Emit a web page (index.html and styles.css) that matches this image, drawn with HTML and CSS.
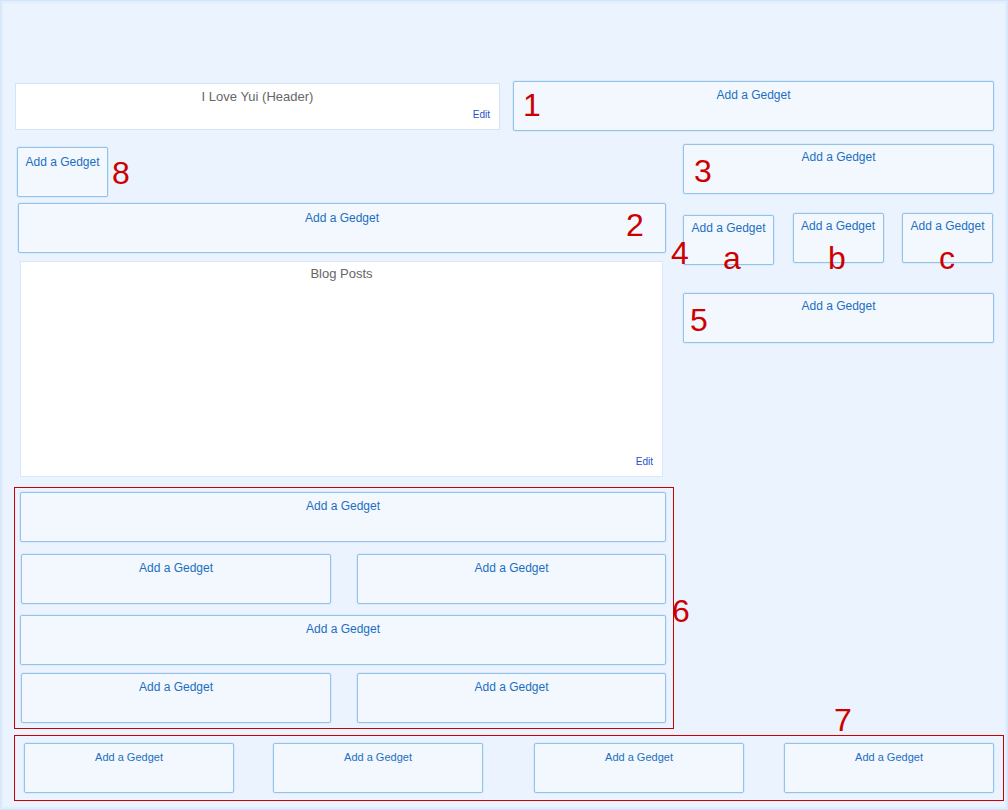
FILE: index.html
```html
<!DOCTYPE html>
<html>
<head>
<meta charset="utf-8">
<link rel="stylesheet" href="styles.css">
</head>
<body>
<div class="page">
  <div class="top-row">
    <div class="header-box">
      <div class="panel-title">I Love Yui (Header)</div>
      <a class="edit">Edit</a>
    </div>
    <div class="gadget box1">Add a Gedget</div>
  </div>

  <div class="middle">
    <div class="left-col">
      <div class="gadget box8">Add a Gedget</div>
      <div class="gadget box2">Add a Gedget</div>
      <div class="blog-box">
        <div class="panel-title">Blog Posts</div>
        <a class="edit">Edit</a>
      </div>
      <div class="red-frame frame6">
        <div class="gadget full">Add a Gedget</div>
        <div class="half-row r1">
          <div class="gadget half">Add a Gedget</div>
          <div class="gadget half">Add a Gedget</div>
        </div>
        <div class="gadget full f2">Add a Gedget</div>
        <div class="half-row r2">
          <div class="gadget half">Add a Gedget</div>
          <div class="gadget half">Add a Gedget</div>
        </div>
      </div>
    </div>
    <div class="right-col">
      <div class="gadget box3">Add a Gedget</div>
      <div class="abc-row">
        <div class="gadget small sa">Add a Gedget</div>
        <div class="gadget small">Add a Gedget</div>
        <div class="gadget small">Add a Gedget</div>
      </div>
      <div class="gadget box5">Add a Gedget</div>
    </div>
  </div>

  <div class="red-frame frame7">
    <div class="gadget foot">Add a Gedget</div>
    <div class="gadget foot">Add a Gedget</div>
    <div class="gadget foot">Add a Gedget</div>
    <div class="gadget foot">Add a Gedget</div>
  </div>

  <span class="num n1">1</span>
  <span class="num n8">8</span>
  <span class="num n3">3</span>
  <span class="num n2">2</span>
  <span class="num n4">4</span>
  <span class="num na">a</span>
  <span class="num nb">b</span>
  <span class="num nc">c</span>
  <span class="num n5">5</span>
  <span class="num n6">6</span>
  <span class="num n7">7</span>
</div>
</body>
</html>
```

FILE: styles.css
```css
* { box-sizing: border-box; }

html, body {
  margin: 0;
  padding: 0;
  background: #eaf2fd;
}

body {
  font-family: "Liberation Sans", Arial, sans-serif;
}

.page {
  position: relative;
  width: 1008px;
  height: 810px;
  padding-top: 81px;
  background: #ebf3fe;
  box-shadow: inset 0 0 0 1px #d3e5fb, inset 0 0 0 3px #e3eefd;
}

.gadget {
  background: #f3f8fe;
  border: 1px solid #93c3ea;
  border-radius: 2px;
  box-shadow: 0 0 0 1px #dcebfa;
  color: #1b6fc2;
  font-size: 12px;
  line-height: 14px;
  text-align: center;
  padding-top: 6px;
  height: 50px;
}

.top-row {
  display: flex;
  align-items: flex-start;
}

.header-box {
  position: relative;
  margin-left: 15px;
  margin-top: 2px;
  width: 485px;
  height: 47px;
  background: #ffffff;
  border: 1px solid #d2e5f8;
}

.panel-title {
  color: #666666;
  font-size: 13px;
  line-height: 16px;
  text-align: center;
  padding-top: 5px;
}

.edit {
  position: absolute;
  right: 9px;
  color: #1f4fc9;
  font-size: 10px;
  line-height: 12px;
}

.header-box .edit { top: 25px; }

.box1 {
  margin-left: 13px;
  width: 481px;
  padding-top: 6px;
}

.middle {
  display: flex;
  align-items: flex-start;
  margin-top: 13px;
}

.left-col {
  margin-left: 14px;
  width: 660px;
  padding-top: 3px;
}

.box8 {
  margin-left: 3px;
  width: 91px;
  padding-top: 7px;
}

.box2 {
  margin-left: 4px;
  margin-top: 6px;
  width: 648px;
  padding-top: 7px;
}

.blog-box {
  position: relative;
  margin-left: 6px;
  margin-top: 8px;
  width: 643px;
  height: 216px;
  background: #ffffff;
  border: 1px solid #d8e8f9;
}

.blog-box .panel-title { padding-top: 4px; }
.blog-box .edit { bottom: 8px; right: 9px; }

.red-frame {
  border: 1px solid #cc0000;
}

.frame6 {
  margin-top: 10px;
  width: 660px;
  height: 242px;
  padding: 4px 0 0 5px;
}

.full {
  width: 646px;
}

.half-row {
  display: flex;
  gap: 26px;
  padding-left: 1px;
  margin-top: 12px;
  width: 646px;
}

.half {
  width: 310px;
}

.half + .half { width: 309px; }

.f2 { margin-top: 11px; }
.r2 { margin-top: 8px; }

.right-col {
  margin-left: 9px;
  width: 311px;
}

.box3 {
  width: 311px;
  padding-top: 5px;
}

.abc-row {
  display: flex;
  justify-content: space-between;
  align-items: flex-start;
  margin-top: 19px;
  width: 310px;
}

.small {
  width: 91px;
  padding-top: 5px;
}

.sa { margin-top: 2px; }

.box5 {
  margin-top: 28px;
  width: 311px;
  padding-top: 5px;
}

.frame7 {
  margin-left: 14px;
  margin-top: 6px;
  width: 990px;
  height: 66px;
  display: flex;
  align-items: flex-start;
  padding: 7px 0 0 9px;
}

.foot {
  width: 210px;
  font-size: 11px;
  line-height: 13px;
  padding-top: 7px;
}

.foot:nth-child(2) { margin-left: 39px; }
.foot:nth-child(3) { margin-left: 51px; }
.foot:nth-child(4) { margin-left: 40px; }

.num {
  position: absolute;
  color: #cc0000;
  font-family: "Liberation Sans", Arial, sans-serif;
  font-size: 32px;
  line-height: 32px;
}

.n1 { left: 523px; top: 89px; }
.n8 { left: 112px; top: 157px; }
.n3 { left: 694px; top: 155px; }
.n2 { left: 626px; top: 209px; }
.n4 { left: 671px; top: 237px; }
.na { left: 723px; top: 242px; }
.nb { left: 828px; top: 242px; }
.nc { left: 939px; top: 242px; }
.n5 { left: 690px; top: 304px; }
.n6 { left: 672px; top: 595px; }
.n7 { left: 834px; top: 704px; }
```
